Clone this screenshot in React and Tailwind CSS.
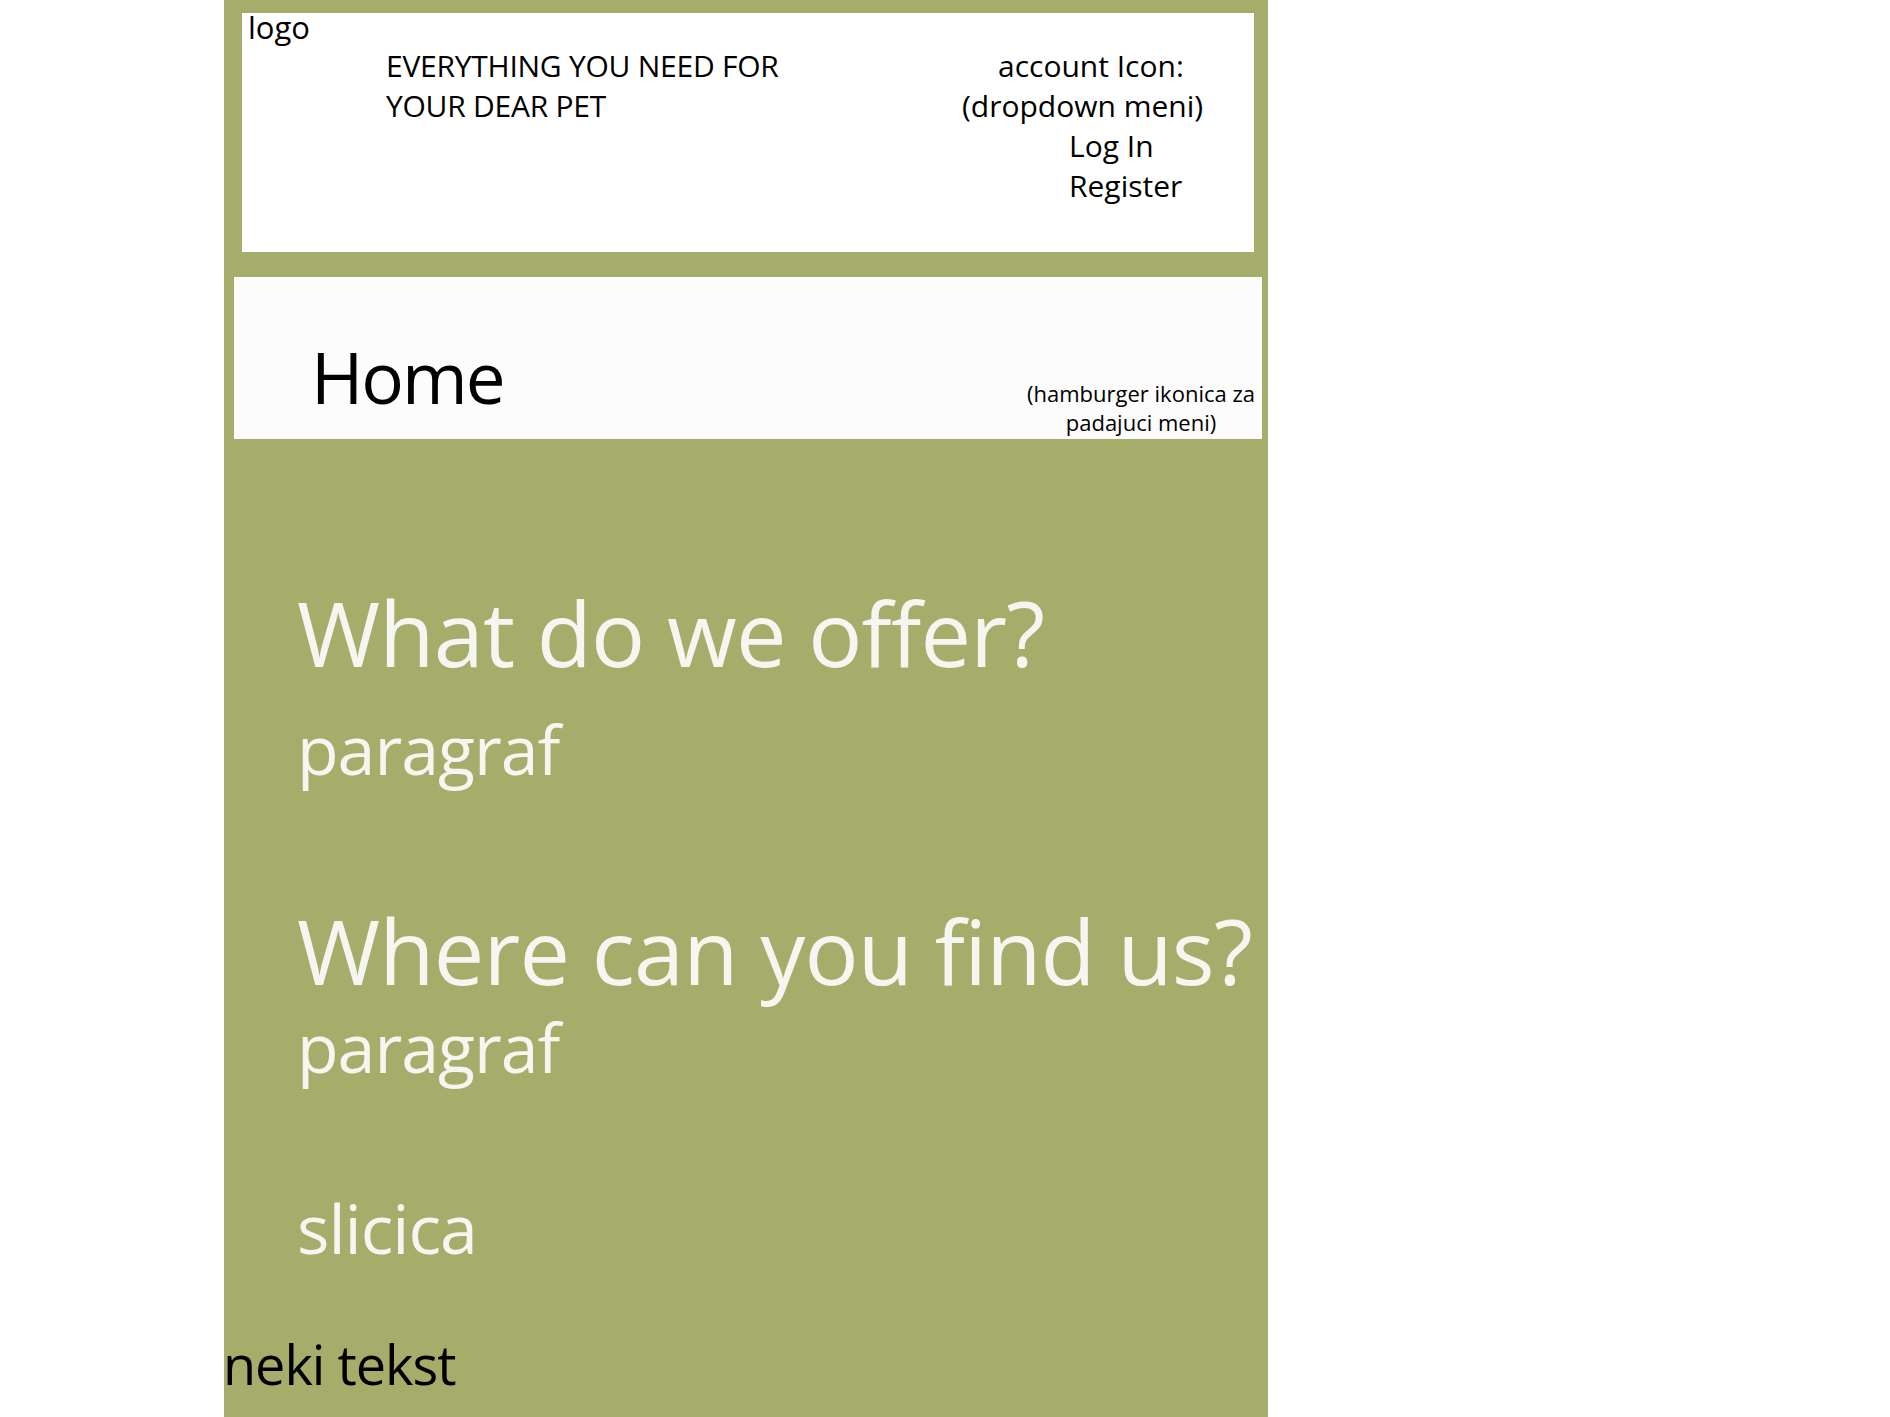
export default function App() {
  return (
    <div className="w-[1890px] h-[1417px] overflow-hidden bg-white font-['Open_Sans',sans-serif]">
      <div className="ml-[224px] w-[1044px] h-[1417px] bg-[#a6ad6b] flex flex-col pt-[13px]">
        {/* Header */}
        <header className="ml-[18px] mr-[14px] h-[239px] bg-white flex text-black text-[30px]">
          <div className="w-[144px] shrink-0 pl-[6px] mt-[-1px] leading-[30px] text-[31px]">logo</div>
          <div className="w-[576px] shrink-0 mt-[33px] leading-[40px] tracking-[-0.25px]">
            EVERYTHING YOU NEED FOR
            <br />
            YOUR DEAR PET
          </div>
          <div className="mt-[33px] leading-[40px] whitespace-nowrap">
            <div className="pl-[36px]">account Icon:</div>
            <div>(dropdown meni)</div>
            <div className="pl-[107px]">Log In</div>
            <div className="pl-[107px]">Register</div>
          </div>
        </header>

        {/* Nav */}
        <nav className="mt-[25px] ml-[10px] mr-[6px] h-[162px] bg-[#fcfcfc] flex items-start text-black">
          <div className="pl-[77px] mt-[64px] text-[71px] leading-[71px] tracking-[-2px]">Home</div>
          <div className="ml-auto mr-[6px] mt-[102px] w-[230px] text-center text-[22px] leading-[29px] whitespace-nowrap">
            (hamburger ikonica za
            <br />
            padajuci meni)
          </div>
        </nav>

        {/* Main */}
        <main className="flex flex-col text-[#f6f6f1]">
          <h1 className="mt-[148px] pl-[73px] text-[90px] leading-[90px] tracking-[-0.8px] whitespace-nowrap">
            What do we offer?
          </h1>
          <p className="mt-[38px] pl-[73px] text-[68px] leading-[68px] tracking-[-1px]">paragraf</p>
          <h2 className="mt-[122px] pl-[73px] text-[90px] leading-[90px] tracking-[-0.8px] whitespace-nowrap">
            Where can you find us?
          </h2>
          <p className="mt-[18px] pl-[73px] text-[68px] leading-[68px] tracking-[-1px]">paragraf</p>
          <p className="mt-[113px] pl-[73px] text-[68px] leading-[68px] tracking-[-1px]">slicica</p>
          <p className="mt-[75px] ml-[-1px] text-black text-[54px] leading-[54px] tracking-[-1px]">neki tekst</p>
        </main>
      </div>
    </div>
  );
}
